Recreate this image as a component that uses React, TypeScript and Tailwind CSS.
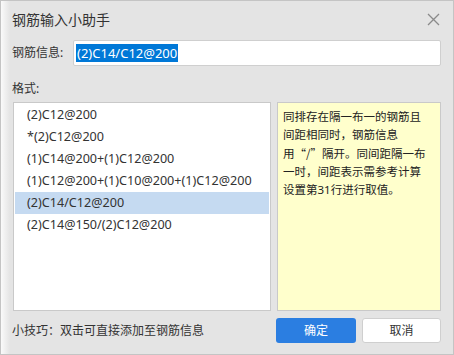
import React from "react";

const items = [
  "(2)C12@200",
  "*(2)C12@200",
  "(1)C14@200+(1)C12@200",
  "(1)C12@200+(1)C10@200+(1)C12@200",
  "(2)C14/C12@200",
  "(2)C14@150/(2)C12@200",
];

export default function App() {
  return (
    <div
      className="w-[454px] h-[355px] border border-[#c4c4c4] bg-[linear-gradient(to_right,#fafafa,#e4e4e4_9px)] text-[#333] flex flex-col"
      style={{ fontFamily: '"Noto Sans", "Noto Sans CJK SC", sans-serif' }}
    >
      <div className="h-[37px] flex items-center justify-between pl-[11px] pr-[12px] shrink-0">
        <span className="text-[14px] leading-none">钢筋输入小助手</span>
        <svg width="13" height="13" viewBox="0 0 13 13" className="mr-[1px]">
          <path d="M1 1L12 12M12 1L1 12" stroke="#8a8a8a" strokeWidth="1.3" />
        </svg>
      </div>
      <div className="flex items-center pl-[11px] pr-[12px] h-[26px] mt-[2px] shrink-0">
        <span className="text-[12px] w-[61px] shrink-0">钢筋信息:</span>
        <div className="flex-1 h-[26px] bg-white border border-[#cfcfcf] rounded-[2px] flex items-center pl-[2px]">
          <span className="bg-[#0078d7] text-white text-[13px] leading-[18px] px-[1px]">(2)C14/C12@200</span>
        </div>
      </div>
      <div className="pl-[11px] text-[12px] h-[16px] leading-[16px] mt-[15px] shrink-0">格式:</div>
      <div className="flex gap-[6px] pl-[12px] pr-[12px] mt-[5px] h-[209px] shrink-0">
        <div className="w-[258px] h-full bg-white border border-[#c9c9c9] pt-[1px] px-[1px]">
          {items.map((t, i) => (
            <div
              key={i}
              className={`h-[22px] flex items-center pl-[12px] text-[12.6px] ${i === 4 ? "bg-[#c5daf1]" : ""}`}
            >
              {t}
            </div>
          ))}
        </div>
        <div className="flex-1 h-full bg-[#ffffcc] border border-[#c9c9c9] pt-[5px] pl-[5px] text-[11.5px] leading-[18px] whitespace-nowrap text-[#222]">
          同排存在隔一布一的钢筋且
          <br />
          间距相同时，钢筋信息
          <br />
          用<span className="font-['Noto_Sans_CJK_SC']">“/”</span>隔开。同间距隔一布
          <br />
          一时，间距表示需参考计算
          <br />
          设置第31行进行取值。
        </div>
      </div>
      <div className="flex items-center pl-[11px] pr-[12px] mt-[7px] h-[25px] shrink-0">
        <span className="text-[12px] flex-1">小技巧：双击可直接添加至钢筋信息</span>
        <button className="w-[80px] h-[25px] rounded-[3px] bg-[#2b7ee1] text-white text-[12px]">确定</button>
        <button className="w-[79px] h-[25px] rounded-[3px] bg-white border border-[#cfcfcf] text-[12px] ml-[6px] text-[#333]">取消</button>
      </div>
    </div>
  );
}
